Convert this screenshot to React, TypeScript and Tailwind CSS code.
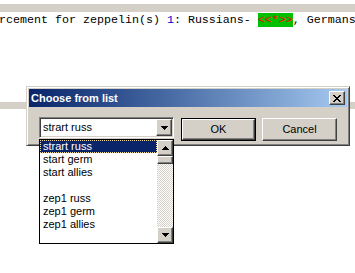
import React from "react";

const raised =
  "border border-t-white border-l-white border-r-[#404040] border-b-[#404040] shadow-[inset_-1px_-1px_0_#808080] bg-[#d4d0c8]";

function Arrow({ up }: { up?: boolean }) {
  return (
    <svg width="7" height="4" viewBox="0 0 7 4" shapeRendering="crispEdges">
      {up ? (
        <path d="M3 0h1v1h1v1h1v1h1v1H0V3h1V2h1V1h1z" fill="#000" />
      ) : (
        <path d="M0 0h7v1H6v1H5v1H4v1H3V3H2V2H1V1H0z" fill="#000" />
      )}
    </svg>
  );
}

function CloseX() {
  return (
    <svg width="8" height="7" viewBox="0 0 8 7" shapeRendering="crispEdges">
      <path
        d="M0 0h2v1h1v1h2V1h1V0h2v1H7v1H6v1H5v1h1v1h1v1h1v1H6V6H5V5H3v1H2v1H0V6h1V5h1V4h1V3H2V2H1V1H0z"
        fill="#000"
      />
    </svg>
  );
}

const items = ["strart russ", "start germ", "start allies", "", "zep1 russ", "zep1 germ", "zep1 allies"];

export default function App() {
  return (
    <div className="relative w-[355px] h-[273px] bg-white overflow-hidden font-['Liberation_Sans',Arial,sans-serif]">
      <div className="h-[4px]" />
      <div className="h-[8px] bg-[#d4d0c8]" />
      <div className="mt-[1px] h-[14px] leading-[14px] -ml-[1px] whitespace-nowrap text-[11.67px] text-black font-['Liberation_Mono','Courier_New',monospace]">
        rcement for zeppelin(s) <span className="text-[#0000c0]">1</span>: Russians-{" "}
        <span className="inline-block h-[14px] bg-[#00c000] text-[#ff0000]">&lt;&lt;*&gt;&gt;</span>, Germans
      </div>
      <div className="mt-[75px] h-[7px] bg-[#d4d0c8]" />

      {/* Dialog */}
      <div className="absolute left-[26px] top-[86px] w-[324px] h-[60px] bg-[#d4d0c8] border border-t-[#d4d0c8] border-l-[#d4d0c8] border-r-[#404040] border-b-[#404040] shadow-[inset_1px_1px_0_#fff,inset_-1px_-1px_0_#808080] p-[2px]">
        <div className="h-[18px] flex items-center justify-between bg-linear-to-r from-[#0a246a] to-[#a6caf0] pl-[2px] pr-[2px]">
          <span className="text-white font-bold text-[11px] leading-[18px]">Choose from list</span>
          <div className={`w-[16px] h-[14px] flex items-center justify-center ${raised}`}>
            <CloseX />
          </div>
        </div>
        <div className="flex items-start">
          {/* combobox */}
          <div className="ml-[10px] mt-[10px] w-[135px] h-[21px] flex bg-white border border-t-[#808080] border-l-[#808080] border-r-white border-b-white shadow-[inset_1px_1px_0_#404040,inset_-1px_-1px_0_#d4d0c8] p-[1px]">
            <div className="flex-1 text-[11px] leading-[17px] pl-[2px] text-black">strart russ</div>
            <div className={`w-[16px] h-[17px] flex items-center justify-center ${raised}`}>
              <Arrow />
            </div>
          </div>
          {/* OK */}
          <div className="ml-[7px] mt-[11px] w-[75px] h-[23px] border border-black">
            <div className={`w-full h-full flex items-center justify-center text-[11px] text-black ${raised}`}>OK</div>
          </div>
          <div className={`ml-[6px] mt-[11px] w-[75px] h-[23px] flex items-center justify-center text-[11px] text-black ${raised}`}>
            Cancel
          </div>
        </div>

        {/* dropdown list */}
        <div className="absolute left-[12px] top-[52px] w-[135px] h-[105px] bg-white border border-black flex">
          <div className="flex-1 flex flex-col">
            {items.map((t, i) => (
              <div
                key={i}
                className={
                  i === 0
                    ? "h-[13px] leading-[11px] text-[11px] pl-[2px] bg-[#0a246a] text-white border border-dotted border-[#f5db95] whitespace-nowrap"
                    : "h-[13px] leading-[13px] text-[11px] pl-[3px] text-black whitespace-nowrap"
                }
              >
                {t}
              </div>
            ))}
          </div>
          <div className="w-[16px] flex flex-col">
            <div className={`h-[16px] flex items-center justify-center ${raised}`}>
              <Arrow up />
            </div>
            <div className="flex-1 flex flex-col bg-[image:repeating-conic-gradient(#d4d0c8_0%_25%,#ffffff_0%_50%)] bg-[length:2px_2px]">
              <div className={`h-[8px] ${raised}`} />
            </div>
            <div className={`h-[16px] flex items-center justify-center ${raised}`}>
              <Arrow />
            </div>
          </div>
        </div>
      </div>
    </div>
  );
}
